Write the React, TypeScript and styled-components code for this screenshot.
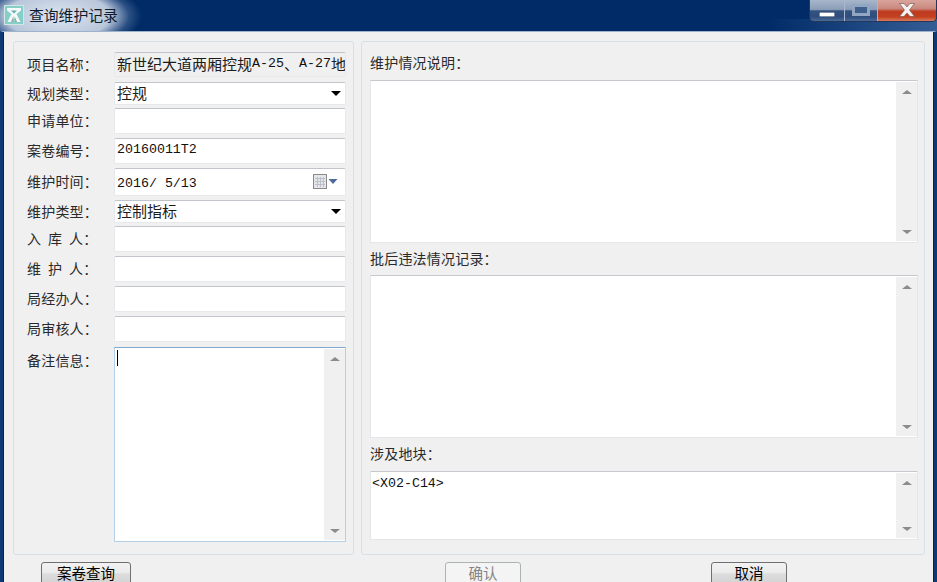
import React from "react";
import styled, { createGlobalStyle } from "styled-components";

const GlobalStyle = createGlobalStyle`
  html, body {
    margin: 0;
    padding: 0;
    overflow: hidden;
    background: #f0f0f0;
  }
`;

const cjk = `"Noto Sans CJK SC", "Noto Sans", sans-serif`;

const Window = styled.div`
  width: 937px;
  height: 582px;
  display: flex;
  flex-direction: column;
  overflow: hidden;
  font-family: ${cjk};
  font-size: 14px;
  color: #1c1c1c;
`;

const TitleBar = styled.div`
  height: 31px;
  flex: none;
  display: flex;
  align-items: flex-start;
  justify-content: space-between;
  background:
    radial-gradient(ellipse 84px 36px at 58px 16px, rgba(226, 232, 242, 0.98) 0%, rgba(205, 216, 232, 0.9) 62%, rgba(120, 145, 185, 0.35) 85%, rgba(0, 43, 102, 0) 100%),
    linear-gradient(to left, rgba(70, 110, 165, 0.75) 0, rgba(0, 43, 102, 0) 170px) bottom / 100% 12px no-repeat,
    #002b66;
`;

const TitleGroup = styled.div`
  display: flex;
  align-items: center;
  height: 30px;
  padding-left: 4px;
  gap: 5px;
`;

const TitleText = styled.span`
  font-size: 14.8px;
  line-height: 20px;
  color: #101c2c;
`;

const Controls = styled.div`
  display: flex;
  height: 21px;
  border: 1px solid #24375a;
  border-top: none;
  border-radius: 0 0 5px 5px;
  overflow: hidden;
`;

const ControlButton = styled.div<{ $w: number; $close?: boolean; $low?: boolean }>`
  box-sizing: border-box;
  width: ${(p) => p.$w}px;
  display: flex;
  align-items: ${(p) => (p.$low ? "flex-end" : "center")};
  padding-bottom: ${(p) => (p.$low ? "4px" : "2px")};
  justify-content: center;
  border-right: 1px solid #a9b8cc;
  background: ${(p) =>
    p.$close
      ? "linear-gradient(#d9a49c 0%, #c98a7f 40%, #bf3a20 55%, #c2401f 80%, #d87a5f 100%)"
      : "linear-gradient(#a8b6ca 0%, #8b9db8 45%, #33527f 52%, #2e4d7c 80%, #4a6a98 100%)"};
  &:last-child {
    border-right: none;
  }
`;

const Body = styled.div`
  flex: 1;
  min-height: 0;
  display: flex;
  flex-direction: column;
  border-left: 3px solid #0d3a74;
  border-right: 3px solid #0d3a74;
  border-top: 1px solid #9fb2cc;
  box-shadow: inset 1px 0 #10203a, inset -1px 0 #10203a;
  background: #f0f0f0;
  padding: 9px 8px 0 10px;
`;

const Panels = styled.div`
  display: flex;
  gap: 7px;
  height: 514px;
  flex: none;
`;

const Panel = styled.div<{ $w: number }>`
  width: ${(p) => p.$w}px;
  box-sizing: border-box;
  border: 1px solid #d6e0e8;
  border-radius: 3px;
  display: flex;
  flex-direction: column;
`;

const FormPanel = styled(Panel)`
  padding: 10px 7px 0 13px;
`;

const MemoPanel = styled(Panel)`
  padding: 5px 6px 0 8px;
`;

const Row = styled.div<{ $h: number; $gap: number }>`
  display: grid;
  grid-template-columns: 87px 232px;
  height: ${(p) => p.$h}px;
  margin-top: ${(p) => p.$gap}px;
`;

const Label = styled.div<{ $top?: boolean }>`
  display: flex;
  align-items: ${(p) => (p.$top ? "flex-start" : "center")};
  padding-top: ${(p) => (p.$top ? "3px" : "0")};
  padding-bottom: ${(p) => (p.$top ? "0" : "2px")};
  line-height: 20px;
  letter-spacing: 0.2px;
  color: #2a2a2a;
`;

const Spread = styled.span`
  letter-spacing: 7px;
`;

const Field = styled.div<{ $readOnly?: boolean; $focused?: boolean }>`
  box-sizing: border-box;
  display: flex;
  align-items: center;
  padding: 0 0 3px 2px;
  font-size: 15px;
  white-space: nowrap;
  overflow: hidden;
  background: ${(p) => (p.$readOnly ? "#f0f0f0" : "#fff")};
  border: 1px solid ${(p) => (p.$focused ? "#b5cfe7" : "#e6e8ec")};
  border-top-color: ${(p) => (p.$focused ? "#7fa9cf" : "#c2c4cb")};
  border-radius: 2px;
`;

const Latin = styled.span`
  font-family: "Liberation Mono", monospace;
  font-size: 13.3px;
  color: #111;
`;

const FieldValue = styled.span`
  flex: 1;
  min-width: 0;
`;

const DropArrow = styled.span`
  width: 0;
  height: 0;
  margin: 3px 4px 0 0;
  border-left: 5px solid transparent;
  border-right: 5px solid transparent;
  border-top: 5px solid #000;
`;

const CalendarSlot = styled.span`
  display: flex;
  margin: 3px 7px 0 0;
`;

const TextBox = styled.div<{ $h?: number; $focused?: boolean }>`
  box-sizing: border-box;
  display: flex;
  height: ${(p) => (p.$h ? `${p.$h}px` : "100%")};
  background: #fff;
  border: 1px solid ${(p) => (p.$focused ? "#b5cfe7" : "#e4e6ea")};
  border-top-color: ${(p) => (p.$focused ? "#7fa9cf" : "#c6c8ce")};
`;

const TextArea = styled.div`
  flex: 1;
  min-width: 0;
  padding: 0 1px;
  line-height: 18px;
`;

const Caret = styled.span`
  display: block;
  width: 1px;
  height: 16px;
  margin: 2px 0 0 1px;
  background: #000;
`;

const ScrollBar = styled.div`
  flex: none;
  width: 21px;
  margin: 1px 0;
  display: flex;
  flex-direction: column;
  align-items: center;
  justify-content: space-between;
  padding: 8px 0 7px;
  box-sizing: border-box;
  background: #f0f0f0;
`;

const ScrollArrow = styled.span<{ $down?: boolean }>`
  width: 0;
  height: 0;
  border-left: 5px solid transparent;
  border-right: 5px solid transparent;
  ${(p) => (p.$down ? "border-top: 4px solid #8c8c8c;" : "border-bottom: 4px solid #8c8c8c;")}
`;

const Caption = styled.div<{ $h: number }>`
  height: ${(p) => p.$h}px;
  flex: none;
  display: flex;
  align-items: center;
  padding-bottom: 3px;
  box-sizing: border-box;
  line-height: 20px;
  letter-spacing: 0.2px;
  color: #2a2a2a;
`;

const Footer = styled.div`
  display: grid;
  grid-template-columns: 404px 266px 1fr;
  padding: 7px 0 0 28px;
`;

const Button = styled.div<{ $w: number; $disabled?: boolean }>`
  box-sizing: border-box;
  width: ${(p) => p.$w}px;
  height: 26px;
  display: flex;
  align-items: center;
  justify-content: center;
  padding-bottom: 5px;
  font-size: 14.5px;
  border: 1px solid ${(p) => (p.$disabled ? "#adb2b5" : "#707070")};
  border-radius: 3px;
  color: ${(p) => (p.$disabled ? "#838383" : "#000")};
  background: ${(p) =>
    p.$disabled ? "#f4f4f4" : "linear-gradient(#f2f2f2 0%, #ebebeb 40%, #dddddd 45%, #cfcfcf 100%)"};
`;

const AppIcon = () => (
  <svg width="20" height="20" viewBox="0 0 20 20">
    <rect x="0.5" y="0.5" width="19" height="19" fill="#86cfc9" stroke="#d3e6e4" />
    <path d="M3 3h14v2.5l-4.5 3.5 4 8h-4l-2.5-5-2.5 5h-4l4-8L3 5.5z" fill="#f6f9f9" />
    <path d="M7 5.5h6L10 8.5z" fill="#5fb0ac" />
    <path d="M9.4 11l-2.4 6h1.6zM10.6 11l2.4 6h-1.6z" fill="#9a9f9f" />
  </svg>
);

const MinimizeGlyph = () => (
  <svg width="16" height="5" viewBox="0 0 16 5">
    <rect x="0.25" y="0.25" width="15.5" height="4.5" fill="#fff" stroke="#33496b" strokeWidth="0.5" />
  </svg>
);

const MaximizeGlyph = () => (
  <svg width="18" height="12" viewBox="0 0 18 12">
    <rect x="1.5" y="1.5" width="15" height="9" fill="#3f5f8c" stroke="#93a6c1" strokeWidth="3" />
  </svg>
);

const CloseGlyph = () => (
  <svg width="16" height="14" viewBox="0 0 16 14">
    <path d="M0.5 0.5h4.5l3 3.4 3-3.4h4.5l-5 6.5 5 6.5h-4.5l-3-3.5-3 3.5H0.5l5-6.5z" fill="#f4f0ee" stroke="#6e4a44" strokeWidth="0.6" />
  </svg>
);

const CalendarGlyph = () => (
  <svg width="25" height="16" viewBox="0 0 25 16">
    <rect x="0.5" y="0.5" width="13" height="14" fill="#e4e6ea" stroke="#8a8a88" />
    <path d="M2 4.5h10M2 7.5h10M2 10.5h10M4.5 3v10M7.5 3v10M10.5 3v10" stroke="#bcc0c8" strokeWidth="1" />
    <path d="M15.5 5h9l-4.5 5z" fill="#4f6a9a" />
  </svg>
);

type FormRow = { label: React.ReactNode; h: number; gap: number; node: React.ReactNode };

const rows: FormRow[] = [
  {
    label: "项目名称：",
    h: 25,
    gap: 0,
    node: (
      <Field $readOnly>
        新世纪大道两厢控规<Latin>A-25</Latin>、<Latin>A-27</Latin>地
      </Field>
    ),
  },
  {
    label: "规划类型：",
    h: 23,
    gap: 5,
    node: (
      <Field>
        <FieldValue>控规</FieldValue>
        <DropArrow />
      </Field>
    ),
  },
  { label: "申请单位：", h: 26, gap: 3, node: <Field /> },
  {
    label: "案卷编号：",
    h: 26,
    gap: 4,
    node: (
      <Field>
        <Latin>20160011T2</Latin>
      </Field>
    ),
  },
  {
    label: "维护时间：",
    h: 28,
    gap: 4,
    node: (
      <Field>
        <FieldValue>
          <Latin>2016/ 5/13</Latin>
        </FieldValue>
        <CalendarSlot>
          <CalendarGlyph />
        </CalendarSlot>
      </Field>
    ),
  },
  {
    label: "维护类型：",
    h: 23,
    gap: 4,
    node: (
      <Field>
        <FieldValue>控制指标</FieldValue>
        <DropArrow />
      </Field>
    ),
  },
  {
    label: (
      <>
        <Spread>入</Spread>
        <Spread>库</Spread>人：
      </>
    ),
    h: 26,
    gap: 3,
    node: <Field />,
  },
  {
    label: (
      <>
        <Spread>维</Spread>
        <Spread>护</Spread>人：
      </>
    ),
    h: 26,
    gap: 4,
    node: <Field />,
  },
  { label: "局经办人：", h: 26, gap: 4, node: <Field /> },
  { label: "局审核人：", h: 26, gap: 4, node: <Field /> },
];

export default function App() {
  return (
    <Window>
      <GlobalStyle />
      <TitleBar>
        <TitleGroup>
          <AppIcon />
          <TitleText>查询维护记录</TitleText>
        </TitleGroup>
        <Controls>
          <ControlButton $w={35} $low>
            <MinimizeGlyph />
          </ControlButton>
          <ControlButton $w={33}>
            <MaximizeGlyph />
          </ControlButton>
          <ControlButton $w={58} $close>
            <CloseGlyph />
          </ControlButton>
        </Controls>
      </TitleBar>
      <Body>
        <Panels>
          <FormPanel $w={341}>
            {rows.map((row, i) => (
              <Row key={i} $h={row.h} $gap={row.gap}>
                <Label>{row.label}</Label>
                {row.node}
              </Row>
            ))}
            <Row $h={195} $gap={5}>
              <Label $top>备注信息：</Label>
              <TextBox $focused>
                <TextArea>
                  <Caret />
                </TextArea>
                <ScrollBar>
                  <ScrollArrow />
                  <ScrollArrow $down />
                </ScrollBar>
              </TextBox>
            </Row>
          </FormPanel>
          <MemoPanel $w={564}>
            <Caption $h={33}>维护情况说明：</Caption>
            <TextBox $h={163}>
              <TextArea />
              <ScrollBar>
                <ScrollArrow />
                <ScrollArrow $down />
              </ScrollBar>
            </TextBox>
            <Caption $h={32}>批后违法情况记录：</Caption>
            <TextBox $h={163}>
              <TextArea />
              <ScrollBar>
                <ScrollArrow />
                <ScrollArrow $down />
              </ScrollBar>
            </TextBox>
            <Caption $h={33}>涉及地块：</Caption>
            <TextBox $h={69}>
              <TextArea>
                <Latin>&lt;X02-C14&gt;</Latin>
              </TextArea>
              <ScrollBar>
                <ScrollArrow />
                <ScrollArrow $down />
              </ScrollBar>
            </TextBox>
          </MemoPanel>
        </Panels>
        <Footer>
          <Button $w={90}>案卷查询</Button>
          <Button $w={76} $disabled>
            确认
          </Button>
          <Button $w={76}>取消</Button>
        </Footer>
      </Body>
    </Window>
  );
}
